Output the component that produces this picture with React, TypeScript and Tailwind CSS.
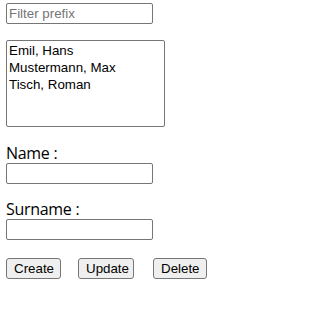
import { useState } from "react";

// --- Data ---
const people = ["Emil, Hans", "Mustermann, Max", "Tisch, Roman"];

const inputCls =
  "block w-[147px] h-[21px] border border-[#767676] rounded-[2px] px-[2px] text-[13.333px] tracking-normal text-black bg-white placeholder:text-[#757575] outline-none font-['Liberation_Sans',Arial,sans-serif]";

const btnCls =
  "h-[21px] px-[7px] border border-[#767676] rounded-[3px] bg-[#efefef] text-[13.333px] text-black leading-none";

export default function App() {
  const [filter, setFilter] = useState("");
  const [name, setName] = useState("");
  const [surname, setSurname] = useState("");

  return (
    <div className="w-[316px] h-[314px] bg-white pl-[6px] pt-[3px] font-['Liberation_Sans',Arial,sans-serif]">
      <input
        className={inputCls}
        placeholder="Filter prefix"
        value={filter}
        onChange={(e) => setFilter(e.target.value)}
      />

      {/* list box */}
      <div className="mt-[16px] w-[159px] h-[87px] border border-[#767676] rounded-[2px] pt-[1px] px-[1px] text-[13.333px] leading-[17px] text-black">
        {people.map((p) => (
          <div key={p} className="px-[1px]">
            {p}
          </div>
        ))}
      </div>

      <div className="font-['Open_Sans','Noto_Sans',sans-serif] text-[16px] tracking-[-0.3px] text-black">
        <div className="mt-[16px] leading-[20px]">Name :</div>
        <input className={inputCls} value={name} onChange={(e) => setName(e.target.value)} />
        <div className="mt-[15px] leading-[20px]">Surname :</div>
        <input className={inputCls} value={surname} onChange={(e) => setSurname(e.target.value)} />
      </div>

      <div className="mt-[18px] flex items-center">
        <button className={`${btnCls} w-[55px]`}>Create</button>
        <button className={`${btnCls} w-[56px] ml-[17px]`}>Update</button>
        <button className={`${btnCls} w-[54px] ml-[19px]`}>Delete</button>
      </div>
    </div>
  );
}
